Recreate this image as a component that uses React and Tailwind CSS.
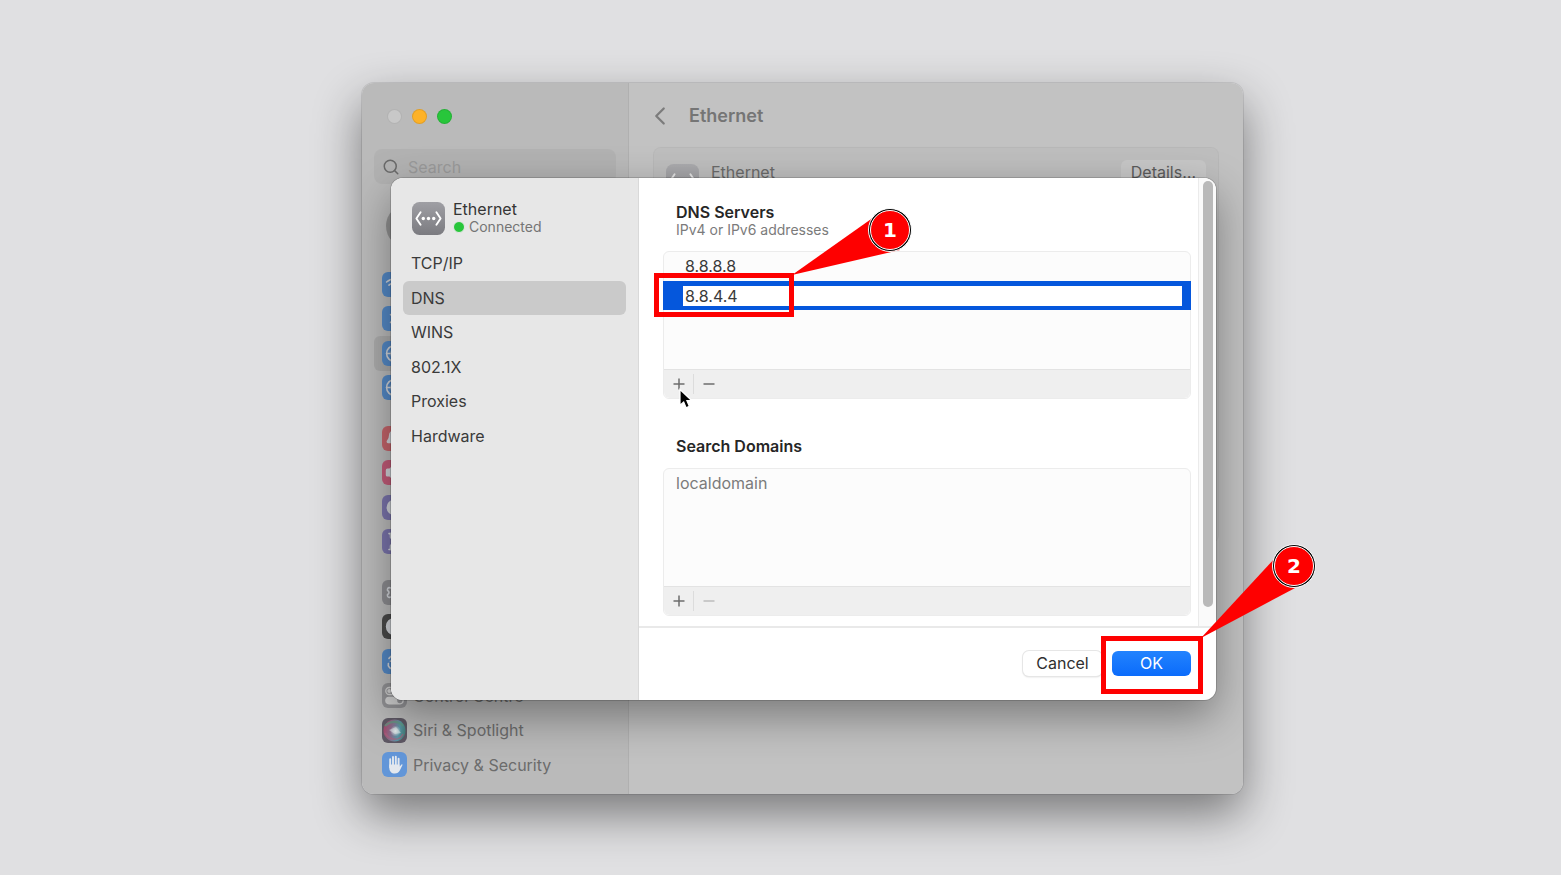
import { useState } from "react";
import {
  Accessibility, Bell, Bluetooth, ChevronLeft, Contrast, Globe,
  Hourglass, Moon, Search, Settings, Volume2, Wifi,
} from "lucide-react";

const GROUPS = [
  [
    { name: "Wi-Fi", Icon: Wifi, tile: "bg-[#5489c6]" },
    { name: "Bluetooth", Icon: Bluetooth, tile: "bg-[#5489c6]" },
    { name: "Network", Icon: Globe, tile: "bg-[#5489c6]", selected: true },
    { name: "VPN", Icon: Globe, tile: "bg-[#5489c6]" },
  ],
  [
    { name: "Notifications", Icon: Bell, tile: "bg-[#c4646a]", solid: true },
    { name: "Sound", Icon: Volume2, tile: "bg-[#c25b78]", solid: true },
    { name: "Focus", Icon: Moon, tile: "bg-[#7a74ab]", solid: true },
    { name: "Screen Time", Icon: Hourglass, tile: "bg-[#7a74ab]", solid: true },
  ],
  [
    { name: "General", Icon: Settings, tile: "bg-[#8c8c90]" },
    { name: "Appearance", Icon: Contrast, tile: "bg-[#4a4a4a]", solid: true },
    { name: "Accessibility", Icon: Accessibility, tile: "bg-[#5489c6]" },
    { name: "Control Centre", Icon: SwitchesIcon, tile: "bg-[#929295]", label: true },
    { name: "Siri & Spotlight", Icon: SiriIcon, tile: "bg-[#5e5864]", label: true },
    { name: "Privacy & Security", Icon: HandIcon, tile: "bg-[#6296d8]", label: true },
  ],
];

const TABS = ["TCP/IP", "DNS", "WINS", "802.1X", "Proxies", "Hardware"];

/* ── Icons ──────────────────────────────────────────── */
function EthernetIcon({ className }) {
  return (
    <svg viewBox="0 0 33 33" className={className} aria-hidden="true">
      <defs>
        <linearGradient id="eth" x1="0" y1="0" x2="0" y2="1">
          <stop offset="0" stopColor="#9f9fa4" />
          <stop offset="1" stopColor="#7b7b80" />
        </linearGradient>
      </defs>
      <rect width="33" height="33" rx="7.5" fill="url(#eth)" />
      <path d="M8.600 10.200 4.400 16.500l4.200 6.300M24.400 10.200l4.200 6.300-4.200 6.300" fill="none" stroke="#fff"
            strokeWidth="1.9" strokeLinecap="round" strokeLinejoin="round" />
      <circle cx="11.3" cy="16.5" r="1.7" fill="#fff" />
      <circle cx="16.5" cy="16.5" r="1.7" fill="#fff" />
      <circle cx="21.7" cy="16.5" r="1.7" fill="#fff" />
    </svg>
  );
}

function SwitchesIcon() {
  return (
    <svg viewBox="0 0 25 25" className="size-full" aria-hidden="true">
      <rect x="3.8" y="4.5" width="17.4" height="7" rx="3.5" fill="none" stroke="#d0d0d0" strokeWidth="1.3" />
      <circle cx="7.3" cy="8" r="2" fill="#d0d0d0" />
      <rect x="3.2" y="13.8" width="18.6" height="7.6" rx="3.8" fill="#d0d0d0" />
      <circle cx="17.8" cy="17.6" r="2.6" fill="#929295" />
    </svg>
  );
}

function SiriIcon() {
  return (
    <svg viewBox="0 0 25 25" className="size-full" aria-hidden="true">
      <defs>
        <linearGradient id="siri" x1="0" y1="0.4" x2="1" y2="0.6">
          <stop offset="0" stopColor="#a8486c" />
          <stop offset="0.45" stopColor="#7f7894" />
          <stop offset="0.7" stopColor="#5a98a8" />
          <stop offset="1" stopColor="#447f7a" />
        </linearGradient>
        <radialGradient id="glow">
          <stop offset="0" stopColor="#e6eeee" />
          <stop offset="1" stopColor="#e6eeee" stopOpacity="0" />
        </radialGradient>
      </defs>
      <circle cx="12.5" cy="12.5" r="11" fill="url(#siri)" />
      <path d="M3 8c5-5 13-6 18 0" fill="none" stroke="#5f9a80" strokeWidth="2.4" opacity="0.7" />
      <path d="M3 15c4 7 14 9 18 1" fill="none" stroke="#b0607c" strokeWidth="1.6" opacity="0.6" />
      <path d="M7 12l7-3 5 6-6 1z" fill="#e6eeee" opacity="0.5" />
      <circle cx="13.5" cy="13" r="5.5" fill="url(#glow)" />
    </svg>
  );
}

function HandIcon() {
  return (
    <svg viewBox="0 0 25 25" className="size-full" fill="none" stroke="#e3e8ee" strokeLinecap="round" aria-hidden="true">
      <path d="M8.2 7.3v8M11 5v9M13.8 4.8v9M16.6 6.8v9" strokeWidth="1.9" />
      <path d="M7.3 12.5h10.2v2.2l2-2.2c.6-.5 1.2.1.9.8l-2.6 5.2c-1 2-2.6 3-5 3-3.400 0-5.500-2.300-5.500-5.800z"
            fill="#e3e8ee" stroke="none" />
    </svg>
  );
}

/* ── Callout marker ─────────────────────────────────── */
function Badge({ className, children }) {
  return (
    <span className={`absolute flex size-[44px] items-center justify-center rounded-full border border-white bg-black p-px ${className}`}>
      <span className="flex size-full items-center justify-center rounded-full border border-white bg-[#fe0000] font-['DejaVu_Sans',sans-serif] text-[20px] font-bold leading-5 text-white">
        {children}
      </span>
    </span>
  );
}

/* ── Settings window ────────────────────────────────── */
function SidebarRow({ name, Icon, tile, selected, solid, label }) {
  return (
    <li className={`flex items-center rounded-md px-2 ${selected ? "bg-black/8" : ""}`}>
      <a href="#" aria-label={name} className="flex items-center gap-1.5 text-[#6c6c6c]">
        <span className={`flex size-[25px] shrink-0 items-center justify-center overflow-hidden rounded-md ${tile}`}>
          {label
            ? <Icon />
            : <Icon size={19} strokeWidth={2} fill={solid ? "currentColor" : "none"} className="text-[#d0d3d8]" />}
        </span>
        {label && <span>{name}</span>}
      </a>
    </li>
  );
}

function SettingsSidebar() {
  return (
    <aside className="w-[267px] shrink-0 border-r border-black/5 bg-[#bababa] px-3 pb-3">
      <div className="flex h-[66px] items-center gap-2.5 px-[13px]">
        <button aria-label="Close" className="size-[15px] rounded-full border border-black/10 bg-[#c8c8c8]" />
        <button aria-label="Minimise" className="size-[15px] rounded-full border border-black/10 bg-[#fdb228]" />
        <button aria-label="Zoom" className="size-[15px] rounded-full border border-black/10 bg-[#28c63b]" />
      </div>
      <label className="flex h-[35px] items-center gap-2 rounded-lg bg-black/4 px-2">
        <Search size={18} strokeWidth={2} className="shrink-0 text-[#6a6a6a]" />
        <input aria-label="Search" placeholder="Search"
               className="w-full bg-transparent outline-none placeholder:text-[#9a9a9a]" />
      </label>
      <div className="flex h-[83px] items-center pl-3">
        <span className="size-11 rounded-full bg-[#8f8f8f]" />
      </div>
      <nav className="space-y-4">
        {GROUPS.map((rows, i) => (
          <ul key={i} className={`grid auto-rows-fr ${i === 2 ? "h-[207px]" : "h-[138px]"}`}>
            {rows.map((r) => <SidebarRow key={r.name} {...r} />)}
          </ul>
        ))}
      </nav>
    </aside>
  );
}

function SettingsMain() {
  return (
    <main className="flex-1 bg-[#c2c2c2] px-6">
      <header className="flex h-16 items-center gap-4 pt-0.5">
        <button aria-label="Back" className="text-[#7c7c7c]">
          <ChevronLeft size={30} strokeWidth={1.8} className="-mx-2" />
        </button>
        <h1 className="pl-1.5 text-[18px] font-semibold text-[#757575]">Ethernet</h1>
      </header>
      <section className="h-[396px] rounded-lg border border-black/3 bg-black/2 px-3">
        <div className="flex items-start gap-3 pt-3">
          <EthernetIcon className="mt-1 size-[33px] opacity-60" />
          <span className="flex-1 pt-0.5 text-[#6a6a6a]">Ethernet</span>
          <button className="h-6 rounded-md bg-white/15 px-2.5 text-[#5c5c5c]">Details…</button>
        </div>
      </section>
    </main>
  );
}

/* ── Ethernet sheet ─────────────────────────────────── */
function SheetSidebar({ tab, onSelect }) {
  return (
    <aside className="w-[248px] shrink-0 rounded-l-xl border-r border-[#d9d9d9] bg-[#e7e7e7] px-3 pt-[22px]">
      <div className="flex items-center gap-2 pl-[9px]">
        <EthernetIcon className="size-[33px] shrink-0" />
        <div className="text-[#353535]">
          <p className="leading-[18px]">Ethernet</p>
          <p className="flex items-center gap-1 text-[14px] leading-[18px] text-[#757575]">
            <span className="size-3 rounded-full border border-[#e7e7e7] bg-[#28c63b]" />
            Connected
          </p>
        </div>
      </div>
      <nav className="mt-2.5 grid h-[207px] auto-rows-fr">
        {TABS.map((t) => (
          <button key={t} onClick={() => onSelect(t)}
                  className={`rounded-md px-2 text-left text-[#3a3a3a] ${t === tab ? "bg-[#cacaca]" : ""}`}>
            {t}
          </button>
        ))}
      </nav>
    </aside>
  );
}

function ListToolbar({ label, canRemove }) {
  return (
    <div className="flex h-[29px] items-center rounded-b-md border-t border-[#e3e3e3] bg-[#efefef] text-[#6d6d6d]">
      <button aria-label={`Add ${label}`} className="flex w-[29px] justify-center">
        <svg viewBox="0 0 12 12" className="size-3" stroke="currentColor" strokeWidth="1.5"><path d="M6 .5v11M.5 6h11" /></svg>
      </button>
      <span className="h-5 w-px bg-[#dcdcdc]" />
      <button aria-label={`Remove ${label}`} disabled={!canRemove}
              className="flex w-[29px] justify-center disabled:text-[#bcbcbc]">
        <svg viewBox="0 0 12 12" className="size-3" stroke="currentColor" strokeWidth="1.5"><path d="M.5 6h11" /></svg>
      </button>
    </div>
  );
}

function DnsServers() {
  const [second, setSecond] = useState("8.8.4.4");

  return (
    <section>
      <h2 className="px-[13px] font-semibold leading-[18px] text-[#262626]">DNS Servers</h2>
      <p className="px-[13px] text-[14px] leading-[18px] text-[#7b7b7b]">IPv4 or IPv6 addresses</p>
      <div className="relative mt-3 rounded-md border border-[#ececec] bg-[#fcfcfc]">
        <ul className="h-[117px] text-[#3a3a3a]">
          <li className="h-[29px] px-[21px] leading-[29px]">8.8.8.8</li>
          <li className="relative -mx-px flex h-[29px] items-center bg-[#0557dc] pl-5 pr-[9px]">
            <input aria-label="DNS server" value={second} onChange={(e) => setSecond(e.target.value)}
                   className="h-5 w-full bg-white px-0.5 outline-none" />
            {/* step 1 */}
            <span className="absolute -left-[9px] -top-2 h-11 w-[140px] border-[5px] border-[#fe0000]" />
            <svg viewBox="0 0 130 70" className="absolute -top-[73px] left-[127px] h-[70px] w-[130px]" aria-hidden="true">
              <path d="M2 67 84 9 110 42z" fill="#fe0000" />
            </svg>
            <Badge className="-top-[73px] left-[205px]">1</Badge>
          </li>
        </ul>
        <ListToolbar label="DNS server" canRemove />
        <svg viewBox="0 0 16 24" className="absolute -bottom-3.5 left-[14px] h-6 w-4" aria-hidden="true">
          <path d="M2 1.500v15.800l3.700-3.400 2.400 5.800 3.200-1.400-2.400-5.600h5z" fill="#000" stroke="#fff" strokeWidth="1.2" />
        </svg>
      </div>
    </section>
  );
}

function SearchDomains() {
  return (
    <section>
      <h2 className="px-[13px] font-semibold leading-[18px] text-[#262626]">Search Domains</h2>
      <div className="mt-[13px] rounded-md border border-[#ececec] bg-[#fcfcfc]">
        <ul className="h-[117px] text-[#7b7b7b]">
          <li className="h-[29px] px-3 leading-[29px]">localdomain</li>
        </ul>
        <ListToolbar label="search domain" canRemove={false} />
      </div>
    </section>
  );
}

function Sheet() {
  const [tab, setTab] = useState("DNS");

  return (
    <div role="dialog" aria-label="Ethernet details"
         className="absolute left-[29px] right-[27px] top-[95px] flex rounded-xl bg-white">
      <SheetSidebar tab={tab} onSelect={setTab} />
      <div className="min-w-0 flex-1">
        <div className="flex border-b-2 border-[#e9e9e9]">
          <div className="flex-1 space-y-[38px] pb-2.5 pl-6 pr-[7px] pt-[25px]">
            <DnsServers />
            <SearchDomains />
          </div>
          <div className="flex w-[18px] justify-center rounded-tr-xl border-l border-[#ebebeb] bg-[#fafafa] pb-[19px] pt-[3px]">
            <span className="w-2.5 rounded-full bg-[#b9b9b9]" />
          </div>
        </div>
        <footer className="flex h-[72px] items-center justify-end gap-2.5 pb-0.5 pr-[25px] text-[#2f2f2f]">
          <button className="h-[25px] w-[79px] rounded-md bg-white leading-[25px] shadow-[0_0_0_1px_#e6e6e6,0_1px_2px_#00000030]">
            Cancel
          </button>
          <div className="relative">
            <button className="block h-[25px] w-[79px] rounded-md bg-linear-to-b from-[#2283fe] to-[#0a6bfb] leading-[25px] text-white">
              OK
            </button>
            {/* step 2 */}
            <span className="absolute -bottom-[18px] -left-[11px] -right-3 -top-[15px] border-[5px] border-[#fe0000]" />
            <svg viewBox="0 0 120 100" className="absolute -top-[106px] left-[83px] h-[100px] w-[120px]" aria-hidden="true">
              <path d="M6 93 80 13 102 42z" fill="#fe0000" />
            </svg>
            <Badge className="-top-[107px] left-[160px]">2</Badge>
          </div>
        </footer>
      </div>
    </div>
  );
}

export default function App() {
  return (
    <div className="flex min-h-screen items-start justify-center bg-[#e0e0e2] pb-20 pl-11 pt-[83px] font-[Inter,'Liberation_Sans',sans-serif] text-[16px] leading-5">
      <div className="relative w-full max-w-[881px] rounded-xl shadow-[0_0_0_1px_#00000018,0_20px_48px_#00000078]">
        <div className="relative flex overflow-hidden rounded-xl">
          <SettingsSidebar />
          <SettingsMain />
          <div className="absolute bottom-[94px] left-[29px] right-[27px] top-[95px] rounded-xl shadow-[0_0_0_1px_#00000026,0_16px_44px_#00000060]" />
        </div>
        <Sheet />
      </div>
    </div>
  );
}
